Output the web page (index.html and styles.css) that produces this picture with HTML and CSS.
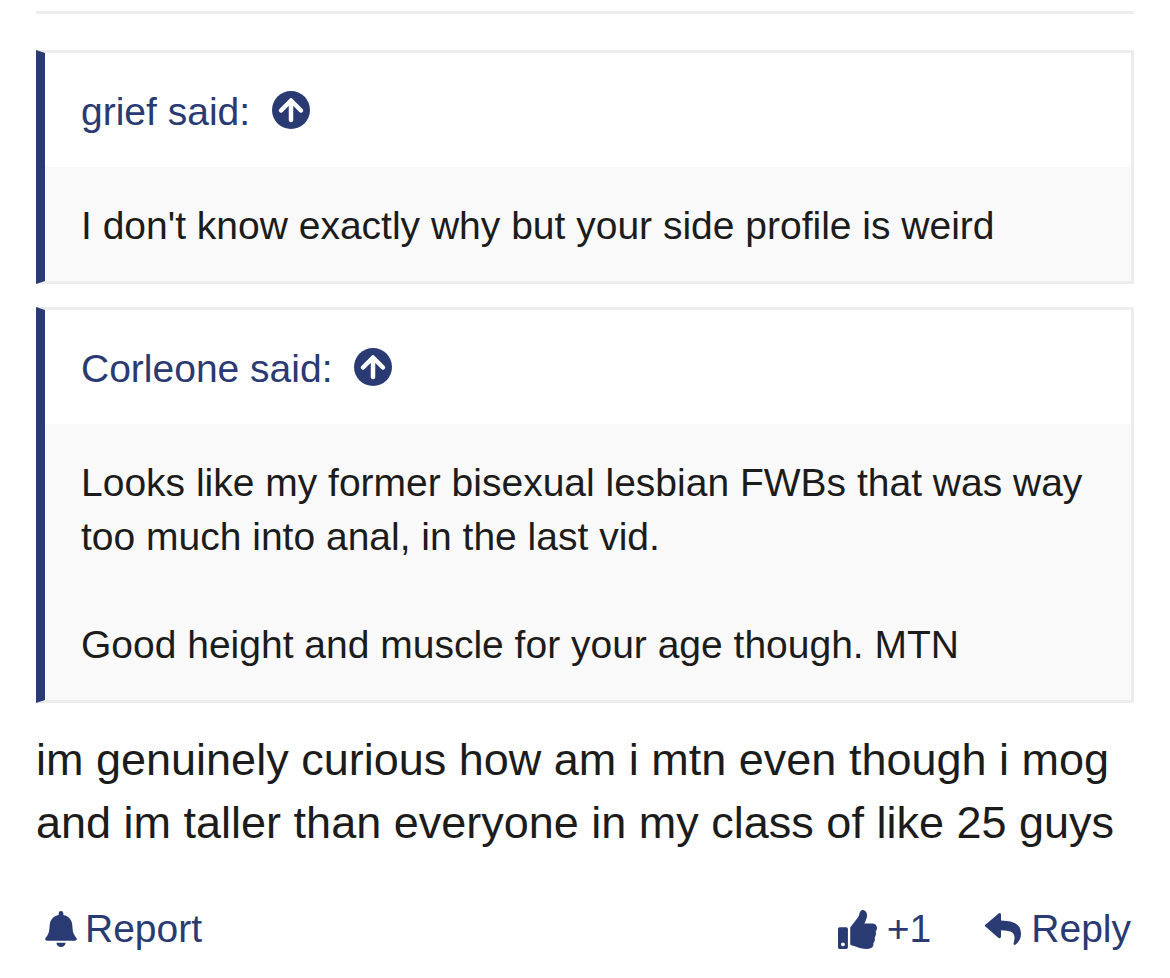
FILE: index.html
```
<!DOCTYPE html>
<html lang="en">
<head>
  <meta charset="UTF-8" />
  <meta name="viewport" content="width=device-width, initial-scale=1.0"/>
  <title>Thread</title>
  <link rel="stylesheet" href="styles.css">
</head>
<body>

  <article class="post">
    <blockquote class="quote">
      <a class="quote-title" href="#grief">grief said:
        <svg class="jump" viewBox="0 0 38 38" aria-hidden="true">
          <circle cx="19" cy="19" r="19" fill="currentColor"/>
          <path d="M19 29V11M9 19.500L19 9.500l10 10" fill="none" stroke="#fff" stroke-width="4.500" stroke-linecap="round" stroke-linejoin="round"/>
        </svg>
      </a>
      <div class="quote-content">I don't know exactly why but your side profile is weird</div>
    </blockquote>

    <blockquote class="quote">
      <a class="quote-title" href="#corleone">Corleone said:
        <svg class="jump" viewBox="0 0 38 38" aria-hidden="true">
          <circle cx="19" cy="19" r="19" fill="currentColor"/>
          <path d="M19 29V11M9 19.500L19 9.500l10 10" fill="none" stroke="#fff" stroke-width="4.500" stroke-linecap="round" stroke-linejoin="round"/>
        </svg>
      </a>
      <div class="quote-content">Looks like my former bisexual lesbian FWBs that was way too much into anal, in the last vid.<br><br>Good height and muscle for your age though. MTN</div>
    </blockquote>

    <p class="message">im genuinely curious how am i mtn even though i mog and im taller than everyone in my class of like 25 guys</p>

    <footer class="actions">
      <a class="action report" href="#report">
        <svg class="bell" viewBox="0 0 96 108" aria-hidden="true">
          <path fill="currentColor" d="M41 12V7a7 7 0 0 1 14 0v5c16 3 26 15 27 31 1 20 3 28 12 37 3 4 1 9-4 9H6c-5 0-7-5-4-9 9-9 11-17 12-37 1-16 11-28 27-31zM34 95h28c-1 8-7 13-14 13s-13-5-14-13z"/>
        </svg>
        Report
      </a>
      <button class="action like" type="button">
        <svg class="thumb" viewBox="0 0 118 118" aria-hidden="true">
          <path fill="currentColor" fill-rule="evenodd" d="M5 52h20q5 0 5 5v56q0 5-5 5H5q-5 0-5-5V57q0-5 5-5zM15 98a6 6 0 1 0 0 12 6 6 0 0 0 0-12z"/>
          <path fill="currentColor" d="M37 55q0-3 2-5c8-8 14-19 21-27C66 17 64 0 74 0c9 0 14 8 14 17 0 10-6 17-8 24h24c8 0 14 6 14 13 0 5-2 9-4 11 2 6 1 13-3 18 2 7 0 13-4 17 2 12-6 18-20 18-22 0-32-8-47-11q-3-1-3-4z"/>
        </svg>
        +1
      </button>
      <a class="action reply" href="#reply">
        <svg class="arrow" viewBox="0 0 108 95" aria-hidden="true">
          <path fill="currentColor" d="M2 34L40 2c4-4 8-2 8 3v17c38 1 60 11 60 41 0 13-7 24-16 31-4 3-8 0-6-4 9-33-6-38-38-39v18c0 6-5 8-9 4L2 41c-3-2-3-5 0-7z"/>
        </svg>
        Reply
      </a>
    </footer>
  </article>

</body>
</html>
```
FILE: styles.css
```
body {
  margin: 0;
  background: #fff;
  color: #1c1c1c;
  font-family: "Liberation Sans", Arial, sans-serif;
}

.post {
  margin: 11px 36px 0;
  padding-top: 36px;
  border-top: 3px solid #ededed;
}

.quote {
  margin: 0 0 23px;
  border: 3px solid #ededed;
  border-left: 9px solid #2a3a72;
  background: #f9f9f9;
  font-size: 39px;
  line-height: 54px;
}

.quote-title {
  display: flex;
  align-items: flex-start;
  gap: 22px;
  padding: 32px 36px 28px;
  background: #fff;
  color: #2a3a72;
  text-decoration: none;
}

.jump {
  width: 38px;
  height: 38px;
  margin-top: 6px;
}

.quote-content {
  padding: 32px 36px 28px;
}

.message {
  margin: 25px 0 0;
  font-size: 45px;
  line-height: 63px;
}

.actions {
  display: flex;
  align-items: center;
  gap: 54px;
  margin-top: 48px;
  padding-right: 3px;
}

.action {
  display: flex;
  align-items: center;
  gap: 10px;
  padding: 0;
  border: 0;
  background: none;
  color: #2a3a72;
  font-family: inherit;
  font-size: 39px;
  line-height: 54px;
  text-decoration: none;
  cursor: pointer;
}

.report {
  gap: 8px;
  margin-right: auto;
  padding-left: 9px;
}

.bell {
  width: 32px;
  height: 36px;
}

.thumb {
  width: 39px;
  height: 39px;
}

.arrow {
  width: 36px;
  height: 32px;
}
```
